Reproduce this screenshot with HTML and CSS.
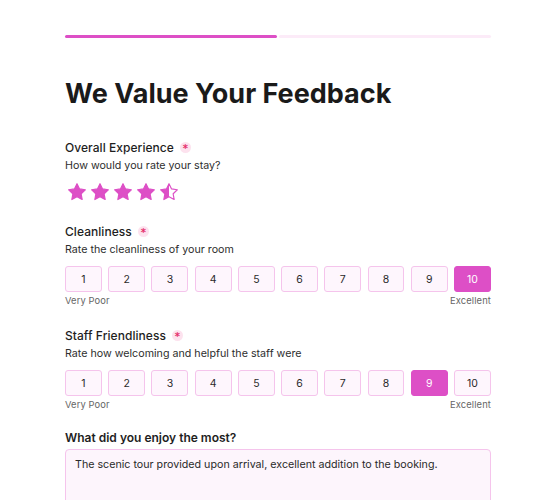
FILE: index.html
```html
<!DOCTYPE html>
<html lang="en">
<head>
<meta charset="utf-8">
<title>Feedback</title>
<link rel="stylesheet" href="styles.css">
</head>
<body>
<div class="page">
  <div class="progress">
    <div class="seg seg-done"></div>
    <div class="seg"></div>
  </div>

  <h1 class="title">We Value Your Feedback</h1>

  <div class="field field-first">
    <div class="label">Overall Experience <span class="req">*</span></div>
    <div class="sub">How would you rate your stay?</div>
    <div class="stars">
      <svg class="star" viewBox="0 0 24 24"><polygon points="12,2 15.09,8.26 22,9.27 17,14.14 18.18,21.02 12,17.77 5.82,21.02 7,14.14 2,9.27 8.91,8.26"/></svg>
      <svg class="star" viewBox="0 0 24 24"><polygon points="12,2 15.09,8.26 22,9.27 17,14.14 18.18,21.02 12,17.77 5.82,21.02 7,14.14 2,9.27 8.91,8.26"/></svg>
      <svg class="star" viewBox="0 0 24 24"><polygon points="12,2 15.09,8.26 22,9.27 17,14.14 18.18,21.02 12,17.77 5.82,21.02 7,14.14 2,9.27 8.91,8.26"/></svg>
      <svg class="star" viewBox="0 0 24 24"><polygon points="12,2 15.09,8.26 22,9.27 17,14.14 18.18,21.02 12,17.77 5.82,21.02 7,14.14 2,9.27 8.91,8.26"/></svg>
      <svg class="star star-half" viewBox="0 0 24 24">
        <defs><linearGradient id="half" x1="0" x2="1" y1="0" y2="0"><stop offset="50%" stop-color="#dd4fc6"/><stop offset="50%" stop-color="#ffffff"/></linearGradient></defs>
        <polygon fill="url(#half)" points="12,2 15.09,8.26 22,9.27 17,14.14 18.18,21.02 12,17.77 5.82,21.02 7,14.14 2,9.27 8.91,8.26"/>
      </svg>
    </div>
  </div>

  <div class="field field-clean">
    <div class="label">Cleanliness <span class="req">*</span></div>
    <div class="sub">Rate the cleanliness of your room</div>
    <div class="scale">
      <button class="opt">1</button><button class="opt">2</button><button class="opt">3</button><button class="opt">4</button><button class="opt">5</button><button class="opt">6</button><button class="opt">7</button><button class="opt">8</button><button class="opt">9</button><button class="opt opt-on">10</button>
    </div>
    <div class="ends"><span>Very Poor</span><span>Excellent</span></div>
  </div>

  <div class="field field-staff">
    <div class="label">Staff Friendliness <span class="req">*</span></div>
    <div class="sub">Rate how welcoming and helpful the staff were</div>
    <div class="scale">
      <button class="opt">1</button><button class="opt">2</button><button class="opt">3</button><button class="opt">4</button><button class="opt">5</button><button class="opt">6</button><button class="opt">7</button><button class="opt">8</button><button class="opt opt-on">9</button><button class="opt">10</button>
    </div>
    <div class="ends"><span>Very Poor</span><span>Excellent</span></div>
  </div>

  <div class="field field-last">
    <div class="label label-strong">What did you enjoy the most?</div>
    <div class="textarea">The scenic tour provided upon arrival, excellent addition to the booking.</div>
  </div>
</div>
</body>
</html>
```

FILE: styles.css
```css
* { box-sizing: border-box; }
html, body { margin: 0; padding: 0; background: #ffffff; }
body {
  font-family: Inter, "Noto Sans", sans-serif;
  color: #1f1f1f;
  overflow: hidden;
}
.page {
  width: 426px;
  margin-left: 65px;
  padding-top: 35px;
}
.progress {
  display: flex;
  gap: 2px;
  height: 3px;
}
.seg {
  flex: 1;
  background: #fcebf8;
  border-radius: 2px;
}
.seg-done { background: #dd4fc6; }

.title {
  margin: 40px 0 0;
  font-size: 27px;
  line-height: 32px;
  font-weight: 700;
  color: #1a1a1a;
}

.field-first { margin-top: 28px; }
.field-clean { margin-top: 20px; }
.field-staff { margin-top: 18px; }
.field-last { margin-top: 16px; }

.label {
  font-size: 12px;
  line-height: 19px;
  font-weight: 500;
  color: #1e1e1e;
  display: flex;
  align-items: center;
  letter-spacing: 0.05px;
}
.label-strong { font-weight: 600; letter-spacing: 0; }
.req {
  display: inline-flex;
  align-items: center;
  justify-content: center;
  width: 11px;
  height: 11px;
  margin-left: 6px;
  border-radius: 50%;
  background: #fde2ee;
  color: #e5306c;
  font-family: "DejaVu Sans", sans-serif;
  font-weight: 700;
  font-size: 10px;
  line-height: 1;
  padding-top: 3px;
}
.sub {
  font-size: 10.7px;
  line-height: 18px;
  color: #2e2e2e;
}

.stars {
  display: flex;
  gap: 3px;
  padding-left: 1.6px;
  margin-top: 7px;
}
.star {
  width: 20px;
  height: 20px;
  fill: #dd4fc6;
  stroke: #dd4fc6;
  stroke-width: 1.4;
  stroke-linejoin: round;
}

.scale {
  display: flex;
  gap: 6.4px;
  margin-top: 7px;
}
.opt {
  flex: 1;
  height: 26px;
  padding: 0;
  border: 1px solid #f5c4ec;
  background: #fef6fd;
  border-radius: 3px;
  font-family: inherit;
  font-size: 10.5px;
  color: #2a2a2a;
}
.opt-on {
  background: #dd4fc6;
  border-color: #dd4fc6;
  color: #ffffff;
}
.ends {
  display: flex;
  justify-content: space-between;
  margin-top: 2px;
  font-size: 9.4px;
  line-height: 14px;
  color: #666666;
  letter-spacing: 0.1px;
}

.textarea {
  margin-top: 2px;
  height: 90px;
  border: 1px solid #f5c4ec;
  background: #fdf5fc;
  border-radius: 4px;
  padding: 6px 9px;
  font-size: 10.7px;
  line-height: 18px;
  color: #2a2a2a;
}
```
